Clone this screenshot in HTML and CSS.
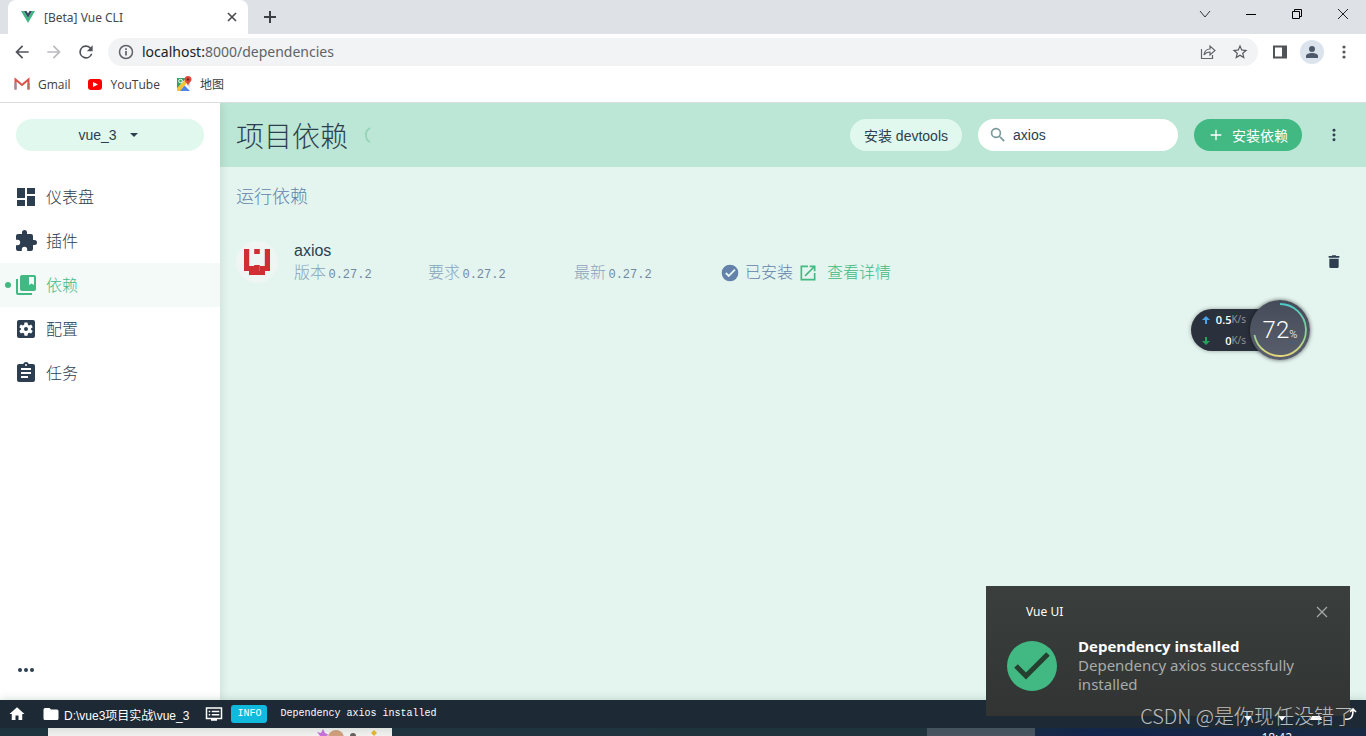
FILE: index.html
```html
<!DOCTYPE html>
<html lang="zh-CN">
<head>
<meta charset="utf-8">
<title>[Beta] Vue CLI</title>
<link rel="stylesheet" href="styles.css">
</head>
<body>
<div class="tabs">
  <div class="tab">
    <svg class="i16" viewBox="0 0 16 16"><path fill="#41b883" d="M1 2h3l4 7 4-7h3L8 14z"/><path fill="#35495e" d="M4 2h2.500L8 4.500 9.500 2H12L8 9z"/></svg>
    <span class="tab-title">[Beta] Vue CLI</span>
    <button class="plain" aria-label="关闭标签"><svg class="i12" viewBox="0 0 12 12"><path d="M2 2l8 8M10 2l-8 8" fill="none" stroke="#45484c" stroke-width="1.600"/></svg></button>
  </div>
  <button class="plain new-tab" aria-label="新标签"><svg class="i16" viewBox="0 0 16 16"><path d="M8 2v12M2 8h12" fill="none" stroke="#3c4043" stroke-width="2"/></svg></button>
  <div class="window-controls">
    <button class="plain" aria-label="搜索标签"><svg class="i16" viewBox="0 0 16 16"><path d="M3 5l5 6 5-6" fill="none" stroke="#333"/></svg></button>
    <button class="plain" aria-label="最小化"><svg class="i16" viewBox="0 0 16 16"><path d="M3 8.500h10" stroke="#000"/></svg></button>
    <button class="plain" aria-label="还原"><svg class="i16" viewBox="0 0 16 16"><path d="M3.500 5.500h7v7h-7zM5.500 5V3.500h7v7H11" fill="none" stroke="#000"/></svg></button>
    <button class="plain" aria-label="关闭"><svg class="i16" viewBox="0 0 16 16"><path d="M3 3l10 10M13 3L3 13" stroke="#222"/></svg></button>
  </div>
</div>
<div class="toolbar">
  <button class="plain" aria-label="后退"><svg class="i20" viewBox="0 0 24 24"><path fill="#50545a" d="M20 11H7.800l5.600-5.600L12 4l-8 8 8 8 1.400-1.400L7.800 13H20z"/></svg></button>
  <button class="plain" aria-label="前进"><svg class="i20" viewBox="0 0 24 24"><path fill="#b9bbbe" d="M12 4l-1.400 1.400 5.600 5.600H4v2h12.200l-5.600 5.600L12 20l8-8z"/></svg></button>
  <button class="plain" aria-label="刷新"><svg class="i20" viewBox="0 0 24 24"><path fill="#50545a" d="M17.650 6.350A8 8 0 1 0 19.730 14h-2.080A6 6 0 1 1 12 6c1.660 0 3.140.69 4.220 1.780L13 11h7V4z"/></svg></button>
  <div class="address">
    <svg class="i16" viewBox="0 0 16 16"><circle cx="8" cy="8" r="6.500" fill="none" stroke="#5f6368" stroke-width="1.500"/><path d="M8 7v4.500M8 4.300V6" stroke="#5f6368" stroke-width="1.700"/></svg>
    <span class="url"><span class="host">localhost:</span>8000/dependencies</span>
    <button class="plain" aria-label="分享"><svg class="i18" viewBox="0 0 18 18"><path d="M2.500 6v9.500h11V12M5 12c.5-4 3-6 6-6V3l5 4.500-5 4.500V9c-3 0-4.500.8-6 3z" fill="none" stroke="#62666b" stroke-width="1.200"/></svg></button>
    <button class="plain" aria-label="收藏"><svg class="i18" viewBox="0 0 24 24"><path fill="#55595e" d="M22 9.240l-7.190-.62L12 2 9.190 8.630 2 9.240l5.460 4.730L5.820 21 12 17.270 18.180 21l-1.630-7.030zM12 15.400l-3.760 2.270 1-4.280-3.320-2.880 4.380-.38L12 6.100l1.710 4.040 4.380.38-3.320 2.880 1 4.280z"/></svg></button>
  </div>
  <button class="plain side-btn" aria-label="侧边栏"><svg class="i16" viewBox="0 0 16 16"><path d="M2 2.500h12v11H2z" fill="none" stroke="#505357" stroke-width="2"/><path d="M10 2h5v12h-5z" fill="#505357"/></svg></button>
  <button class="plain avatar" aria-label="用户"><svg class="i16" viewBox="0 0 16 16"><circle cx="8" cy="5" r="3" fill="#4d5968"/><path fill="#4d5968" d="M2 14v-2c0-4 12-4 12 0v2z"/></svg></button>
  <button class="plain" aria-label="菜单"><svg class="i16" viewBox="0 0 16 16"><g fill="#55585c"><circle cx="8" cy="3" r="1.600"/><circle cx="8" cy="8" r="1.600"/><circle cx="8" cy="13" r="1.600"/></g></svg></button>
</div>
<nav class="bookmarks">
  <a href="#gmail"><svg class="i16" viewBox="0 0 16 16"><path d="M1.500 13.500V3.500L8 9l6.500-5.500v10" fill="none" stroke="#d9534b" stroke-width="2"/><path d="M1.500 7v6.500" stroke="#8794a8" stroke-width="2"/><path d="M14.500 7v6.500" stroke="#b86b5f" stroke-width="2"/></svg>Gmail</a>
  <a href="#youtube"><svg class="i16" viewBox="0 0 16 16"><rect x="1" y="3" width="14" height="11" rx="3" fill="#f00"/><path fill="#fff" d="M6 6l5 2.500L6 11z"/></svg>YouTube</a>
  <a href="#maps"><svg class="i16" viewBox="0 0 16 16"><path fill="#34a264" d="M1 2h9L1 13z"/><path fill="#dfe3e6" d="M10 5h4v9z"/><path fill="#4c84e8" d="M2 15l6-6 6 6z"/><path fill="#f4c33b" d="M1 12l8-8 2 3-7 8H1z"/><path fill="#dd4b3e" d="M12 0a3.500 3.500 0 0 0-3.500 3.500C8.500 6 11.500 7 12 10c.5-3 3.500-4 3.500-6.500A3.500 3.500 0 0 0 12 0z"/><circle cx="12" cy="3.500" r="1.200" fill="#7b1d18"/><circle cx="4.500" cy="5" r="1.800" fill="none" stroke="#fff"/></svg>地图</a>
</nav>
<div class="app">
  <aside class="sidebar">
    <button class="project">vue_3<svg class="i16" viewBox="0 0 24 24"><path d="M6 9l6 6 6-6z" fill="#2c3e50"/></svg></button>
    <nav class="menu">
      <a href="#dashboard"><svg class="i24" viewBox="0 0 24 24"><path d="M3 13h8V3H3zm0 8h8v-6H3zm10 0h8V11h-8zm0-18v6h8V3z"/></svg><span>仪表盘</span></a>
      <a href="#plugins"><svg class="i24" viewBox="0 0 24 24"><path d="M20.500 11H19V7a2 2 0 0 0-2-2h-4V3.500a2.500 2.500 0 0 0-5 0V5H4a2 2 0 0 0-2 2v3.800h1.500a2.700 2.700 0 0 1 0 5.400H2V20a2 2 0 0 0 2 2h3.800v-1.500a2.700 2.700 0 0 1 5.400 0V22H17a2 2 0 0 0 2-2v-4h1.500a2.500 2.500 0 0 0 0-5z"/></svg><span>插件</span></a>
      <a href="#dependencies" class="active" aria-current="page"><svg class="i24" viewBox="0 0 24 24"><path d="M4 6H2v14a2 2 0 0 0 2 2h14v-2H4zM20 2H8a2 2 0 0 0-2 2v12a2 2 0 0 0 2 2h12a2 2 0 0 0 2-2V4a2 2 0 0 0-2-2zm0 10l-2.500-1.500L15 12V4h5z"/></svg><span>依赖</span></a>
      <a href="#configuration"><svg class="i24" viewBox="0 0 24 24"><path fill-rule="evenodd" d="M5 3h14a2 2 0 0 1 2 2v14a2 2 0 0 1-2 2H5a2 2 0 0 1-2-2V5a2 2 0 0 1 2-2zm5.500 2.500l-.4 2.200-1.200.7-2.100-.8-1.500 2.600 1.700 1.400v1l-1.700 1.400 1.500 2.600 2.100-.8 1.200.7.400 2.200h3l.4-2.200 1.200-.7 2.100.8 1.500-2.600-1.700-1.400v-1l1.700-1.400-1.500-2.600-2.100.8-1.200-.7-.4-2.200zM12 10a2 2 0 1 1 0 4 2 2 0 0 1 0-4z"/></svg><span>配置</span></a>
      <a href="#tasks"><svg class="i24" viewBox="0 0 24 24"><path d="M19 3h-4.180a3 3 0 0 0-5.640 0H5a2 2 0 0 0-2 2v14a2 2 0 0 0 2 2h14a2 2 0 0 0 2-2V5a2 2 0 0 0-2-2zm-7 0a1 1 0 1 1 0 2 1 1 0 0 1 0-2zm2 14H7v-2h7zm3-4H7v-2h10zm0-4H7V7h10z"/></svg><span>任务</span></a>
    </nav>
    <button class="plain more" aria-label="更多"><svg class="i24" viewBox="0 0 24 24"><g fill="#2c3e50"><circle cx="6" cy="12" r="2"/><circle cx="12" cy="12" r="2"/><circle cx="18" cy="12" r="2"/></g></svg></button>
  </aside>
  <main class="content">
    <header class="page-head">
      <h1>项目依赖</h1>
      <svg class="spinner" viewBox="0 0 20 20"><path d="M8 3a8 8 0 0 0 0 14" fill="none" stroke="#8fd3b2" stroke-width="1.600"/></svg>
      <div class="actions">
        <button class="pill">安装 devtools</button>
        <label class="search"><svg class="i16" viewBox="2 2 20 20"><path fill="#7c9a9c" d="M15.500 14h-.79l-.28-.27a6.500 6.500 0 1 0-.7.700l.27.280v.79l5 5 1.500-1.500zm-6 0a4.500 4.500 0 1 1 0-9 4.500 4.500 0 0 1 0 9z"/></svg><input type="text" value="axios" aria-label="搜索"></label>
        <button class="pill primary"><svg class="i16" viewBox="0 0 24 24"><path fill="#fff" d="M20 13h-7v7h-2v-7H4v-2h7V4h2v7h7z"/></svg>安装依赖</button>
        <button class="plain dots" aria-label="更多操作"><svg class="i16" viewBox="0 0 24 24"><g fill="#2c3e50"><circle cx="12" cy="5" r="2.200"/><circle cx="12" cy="12" r="2.200"/><circle cx="12" cy="19" r="2.200"/></g></svg></button>
      </div>
    </header>
    <h2>运行依赖</h2>
    <section class="dep">
      <div class="dep-logo"><svg viewBox="0 0 42 42"><path fill="#cf2e33" d="M8 8h5.200v17h5v5.500h-5V30H8zM28.800 8H34v22h-5v.5h-5V25h4.800zM18.200 8h5.600v5h-5.600zM18.200 24h5.600v6h-5.600zM13 30h16v4H13z"/></svg></div>
      <div class="dep-info">
        <div class="name">axios</div>
        <div class="meta">
          <span>版本 <b>0.27.2</b></span><span>要求 <b>0.27.2</b></span><span>最新 <b>0.27.2</b></span>
          <div class="state"><svg class="i20" viewBox="0 0 24 24"><path fill="#6381aa" d="M12 2a10 10 0 1 0 0 20 10 10 0 0 0 0-20z"/><path d="M7 12l3.500 3.500L18 8" fill="none" stroke="#e4f5ef" stroke-width="2.200"/></svg><span>已安装</span>
          <a href="#details"><svg class="i20" viewBox="0 0 24 24"><path fill="#42b983" d="M19 19H5V5h7V3H3v18h18v-9h-2zM14 3v2h3.600l-9.800 9.800 1.400 1.400L19 6.400V10h2V3z"/></svg><span>查看详情</span></a></div>
        </div>
      </div>
      <button class="plain" aria-label="卸载"><svg class="i16" viewBox="0 0 24 24"><path fill="#2c3e50" d="M5 7h14v12a2 2 0 0 1-2 2H7a2 2 0 0 1-2-2zM4 3h4.500l1-1h5l1 1H20v2.500H4z"/></svg></button>
    </section>
  </main>
</div>
<footer class="status">
  <button class="plain" aria-label="主页"><svg class="i18" viewBox="0 0 24 24"><path fill="#fff" d="M10 20v-6h4v6h5v-8h3L12 3 2 12h3v8z"/></svg></button>
  <div class="path"><svg class="i18" viewBox="0 0 24 24"><path fill="#fff" d="M10 4H4a2 2 0 0 0-2 2v12a2 2 0 0 0 2 2h16a2 2 0 0 0 2-2V8a2 2 0 0 0-2-2h-8z"/></svg>D:\vue3项目实战\vue_3</div>
  <div class="log"><svg class="i18" viewBox="0 0 24 24"><path fill="none" stroke="#fff" stroke-width="2" d="M2 4h20v14H2zM8 20h8M9 8.500h10M9 13h10M5 8.500h2M5 13h2"/></svg><span class="badge">INFO</span><span class="message">Dependency axios installed</span></div>
  <div class="status-end"><span class="message">2022/6/4 18:42:27</span>
    <svg class="i16" viewBox="0 0 16 16"><path fill="#fff" d="M8 1c6 0 6 7 3 10l-3 4-3-4C2 8 2 1 8 1z"/></svg>
    <svg class="i16" viewBox="0 0 16 16"><path fill="#fff" d="M8 1c6 0 6 7 3 10l-3 4-3-4C2 8 2 1 8 1z"/></svg>
    <svg class="i16" viewBox="0 0 16 16"><path fill="#fff" d="M2 14l6-12 6 12z"/></svg>
    <svg class="i16" viewBox="0 0 16 16"><path fill="none" stroke="#fff" stroke-width="1.600" d="M3 13c6 1 8-2 8-9M8 6l3-3 3 3"/></svg></div>
</footer>
<div class="taskbar">
  <div class="task-search"><svg viewBox="0 0 70 8"><path fill="#c873dc" d="M1 4l4 1 2-4 2 4 4 2-3 1H4z"/><circle cx="20" cy="10" r="8" fill="#d2a17d"/><circle cx="37" cy="8" r="3" fill="#66615e"/><path fill="#e8b62f" d="M55 5l3-3 3 3-3 3z"/></svg></div>
  <div class="task-window"></div>
  <div class="clock">18:42</div>
</div>
<div class="monitor">
  <div class="rates">
    <div><svg viewBox="0 0 8 8"><path fill="#4ba3ea" d="M4 0l4 4H5v4H3V4H0z"/></svg><b>0.5</b><span>K/s</span></div>
    <div><svg viewBox="0 0 8 8"><path fill="#25a35c" d="M4 8l4-4H5V0H3v4H0z"/></svg><b>0</b><span>K/s</span></div>
  </div>
  <div class="gauge"><svg viewBox="0 0 60 60"><defs><linearGradient id="ring" x1="0" y1="0" x2="0" y2="1"><stop offset="0" stop-color="#4cc9c6"/><stop offset=".6" stop-color="#8ed391"/><stop offset="1" stop-color="#e5d67b"/></linearGradient></defs><path d="M30 4a26 26 0 1 1-25.600 31" fill="none" stroke="url(#ring)" stroke-width="1.800"/></svg><span>72<small>%</small></span></div>
</div>
<div class="toast" role="status">
  <div class="toast-head"><span>Vue UI</span><button class="plain" aria-label="关闭通知"><svg class="i16" viewBox="0 0 16 16"><path d="M3 3l10 10M13 3L3 13" stroke="#a9abaa" stroke-width="1.200"/></svg></button></div>
  <div class="toast-body"><svg viewBox="0 0 52 52"><circle cx="26" cy="26" r="25" fill="#42b983"/><path d="M10 26l10 10 22-22" fill="none" stroke="#25402f" stroke-width="5"/></svg>
    <div><strong>Dependency installed</strong><p>Dependency axios successfully installed</p></div></div>
</div>
<div class="watermark">CSDN @是你现任没错了</div>
</body>
</html>
```
FILE: styles.css
```css
* { box-sizing: border-box; }
body {
  margin: 0;
  height: 100vh;
  display: flex;
  flex-direction: column;
  position: relative;
  overflow: hidden;
  font-family: "Liberation Sans", "Noto Sans CJK SC", sans-serif;
  font-size: 14px;
  color: #2c3e50;
  background: #fff;
}
a { color: inherit; text-decoration: none; }
svg { flex: none; display: block; }
.i12 { width: 12px; height: 12px; }
.i16 { width: 16px; height: 16px; }
.i18 { width: 18px; height: 18px; }
.i20 { width: 20px; height: 20px; }
.i24 { width: 24px; height: 24px; }
button { font: inherit; color: inherit; border: 0; }
.plain { background: none; padding: 0; display: flex; align-items: center; justify-content: center; }

.tabs { height: 34px; flex: none; display: flex; align-items: stretch; background: #dee1e6; padding-left: 8px; }
.tab { width: 240px; background: #fff; border-radius: 8px 8px 0 0; display: flex; align-items: center; gap: 8px; padding: 0 10px 0 12px; }
.tab-title { flex: 1; font: 12px "Noto Sans", sans-serif; color: #45484c; }
.new-tab { margin-left: 14px; }
.window-controls { margin-left: auto; display: flex; }
.window-controls .plain { width: 46px; padding-bottom: 6px; }

.toolbar { height: 36px; flex: none; display: flex; align-items: center; gap: 12px; padding: 0 14px 0 12px; }
.address { flex: 1; height: 28px; border-radius: 14px; background: #f1f3f4; display: flex; align-items: center; gap: 8px; padding: 0 9px 0 10px; }
.toolbar .address .plain + .plain { margin-left: 6px; }
.url { flex: 1; font: 14px/20px "Noto Sans", sans-serif; color: #5f6368; }
.host { color: #202124; }
.side-btn { margin-left: 2px; }
.avatar { width: 24px; height: 24px; border-radius: 50%; background: #dbe3ec; }

.bookmarks { height: 33px; flex: none; display: flex; gap: 16px; padding: 0 14px 4px; border-bottom: 1px solid #dadedd; font: 12px "Open Sans", "Noto Sans CJK SC", sans-serif; color: #3c4043; }
.bookmarks a { display: flex; align-items: center; gap: 8px; }

.app { flex: 1; min-height: 0; display: flex; }
.sidebar { width: 220px; flex: none; display: flex; flex-direction: column; padding: 16px 0 18px; z-index: 1; box-shadow: 0 0 10px rgba(0, 60, 40, .15); clip-path: inset(0 -12px 0 0); background: #fff; }
.project { height: 32px; margin: 0 16px 24px; border-radius: 16px; background: #e0f8ed; display: flex; align-items: center; justify-content: center; gap: 9px; }
.menu a { height: 44px; display: flex; align-items: center; gap: 8px; padding-left: 14px; font-size: 16px; font-weight: 300; fill: #2c3e50; }
.menu a span { padding-bottom: 3px; }
.menu a.active { background: #f3faf7; color: #42b983; fill: #42b983; padding-left: 5px; gap: 3px; }
.menu a.active::before { content: ""; width: 6px; height: 6px; border-radius: 50%; background: #42b983; }
.menu a.active svg { margin-right: 5px; }
.more { width: 24px; margin: auto 0 0 14px; }

.content { flex: 1; min-width: 0; background: #e4f5ef; }
.page-head { height: 64px; display: flex; align-items: center; padding: 0 16px; background: #bce6d5; }
h1 { margin: 0; font: 300 28px/40px "Noto Sans CJK SC", sans-serif; }
.spinner { width: 20px; height: 20px; margin-left: 14px; }
.actions { margin-left: auto; display: flex; gap: 16px; }
.pill { height: 32px; border-radius: 16px; padding: 0 14px; background: #e0f8ed; display: flex; align-items: center; gap: 8px; }
.primary { background: #42b983; color: #fff; }
.search { width: 200px; height: 32px; border-radius: 16px; background: #fff; display: flex; align-items: center; gap: 7px; padding: 0 12px; }
.search input { width: 100%; min-width: 0; border: 0; padding: 0; outline: 0; background: none; font: inherit; color: inherit; }
.dots { width: 32px; height: 32px; }
h2 { margin: 0; padding: 16px 16px 0; font: 300 18px/24px "Noto Sans CJK SC", sans-serif; color: #6381aa; }
.dep { display: flex; align-items: center; padding: 32px 24px 0 16px; }
.dep-logo { width: 42px; height: 42px; margin-right: 16px; border-radius: 50%; background: #eef5f2; }
.dep-info { flex: 1; padding-top: 2px; }
.name { font-size: 16px; line-height: 20px; }
.meta { display: grid; grid-template-columns: 134px 146px 146px 1fr; align-items: center; font-size: 16px; line-height: 24px; font-weight: 300; color: #8aa3bd; }
.meta b { font: 12px "Liberation Mono", monospace; color: #7188a5; margin-left: -2px; }
.state, .state a { display: flex; align-items: center; gap: 5px; }
.state { color: #6381aa; }
.state a { color: #42b983; gap: 9px; }

.status { height: 28px; flex: none; display: flex; align-items: center; padding: 0 8px; background: #1d2935; color: #fff; font-size: 12px; z-index: 2; box-shadow: 0 0 10px rgba(0, 60, 40, .2); }
.path { display: flex; align-items: center; gap: 4px; margin-left: 16px; }
.log { display: flex; align-items: center; gap: 8px; margin-left: 16px; }
.badge { background: #0fbadd; border-radius: 3px; padding: 0 6px; font: 10px/18px "Liberation Mono", monospace; }
.message { font: 10px/18px "Liberation Mono", monospace; margin-left: 5px; }
.status-end { margin-left: auto; display: flex; align-items: center; gap: 18px; }

.taskbar { height: 8px; flex: none; display: flex; overflow: hidden; background: linear-gradient(90deg, #1f3540, #22343f 68%, #14254d 80%, #1b2945); }
.task-search { width: 344px; margin-left: 48px; background: #f2f2f1; display: flex; justify-content: flex-end; }
.task-search svg { width: 70px; height: 8px; margin-right: 6px; }
.task-window { width: 108px; margin-left: 535px; background: #4a5663; }
.clock { margin: 2px 74px 0 auto; color: #fff; font: 12px/16px "Open Sans", sans-serif; }

.monitor { position: absolute; right: 56px; top: 300px; z-index: 3; display: flex; align-items: center; }
.rates { width: 75px; height: 42px; margin-right: -16px; border-radius: 21px 0 0 21px; padding-right: 20px; background: #2b313c; display: flex; flex-direction: column; color: #fff; font: 11px/21px "Open Sans", sans-serif; box-shadow: 0 0 4px rgba(0, 0, 0, .35); }
.rates div { display: flex; align-items: center; justify-content: flex-end; }
.rates svg { width: 8px; height: 8px; margin: 0 auto 0 11px; }
.rates b { font-weight: 600; }
.rates span { color: #9499a4; font-size: 10px; }
.gauge { width: 60px; height: 60px; border-radius: 50%; background: linear-gradient(#454b58, #5a5f6d); display: grid; place-items: center; box-shadow: 0 0 4px rgba(0, 0, 0, .6); color: #fff; font: 300 24px Roboto, sans-serif; }
.gauge > * { grid-area: 1 / 1; }
.gauge svg { width: 60px; height: 60px; }
.gauge small { font-size: 11px; }

.toast { position: absolute; right: 16px; bottom: 20px; z-index: 4; width: 364px; height: 130px; padding: 18px 20px; background: linear-gradient(#3a3f3d, #313432); color: #fff; font-family: "Noto Sans", sans-serif; }
.toast-head { display: flex; justify-content: space-between; padding-left: 20px; font-size: 12px; line-height: 16px; }
.toast-body { display: flex; gap: 20px; padding-top: 17px; font-size: 15px; line-height: 19px; }
.toast-body svg { width: 52px; height: 52px; margin-top: 3px; }
.toast-body strong { font-family: "Open Sans", sans-serif; }
.toast-body p { margin: 0; color: #a9abaa; }
.watermark { position: absolute; right: 12px; bottom: 6px; z-index: 5; font: 300 20px/28px "Noto Sans CJK SC", sans-serif; color: rgba(225, 228, 230, .8); }
```
